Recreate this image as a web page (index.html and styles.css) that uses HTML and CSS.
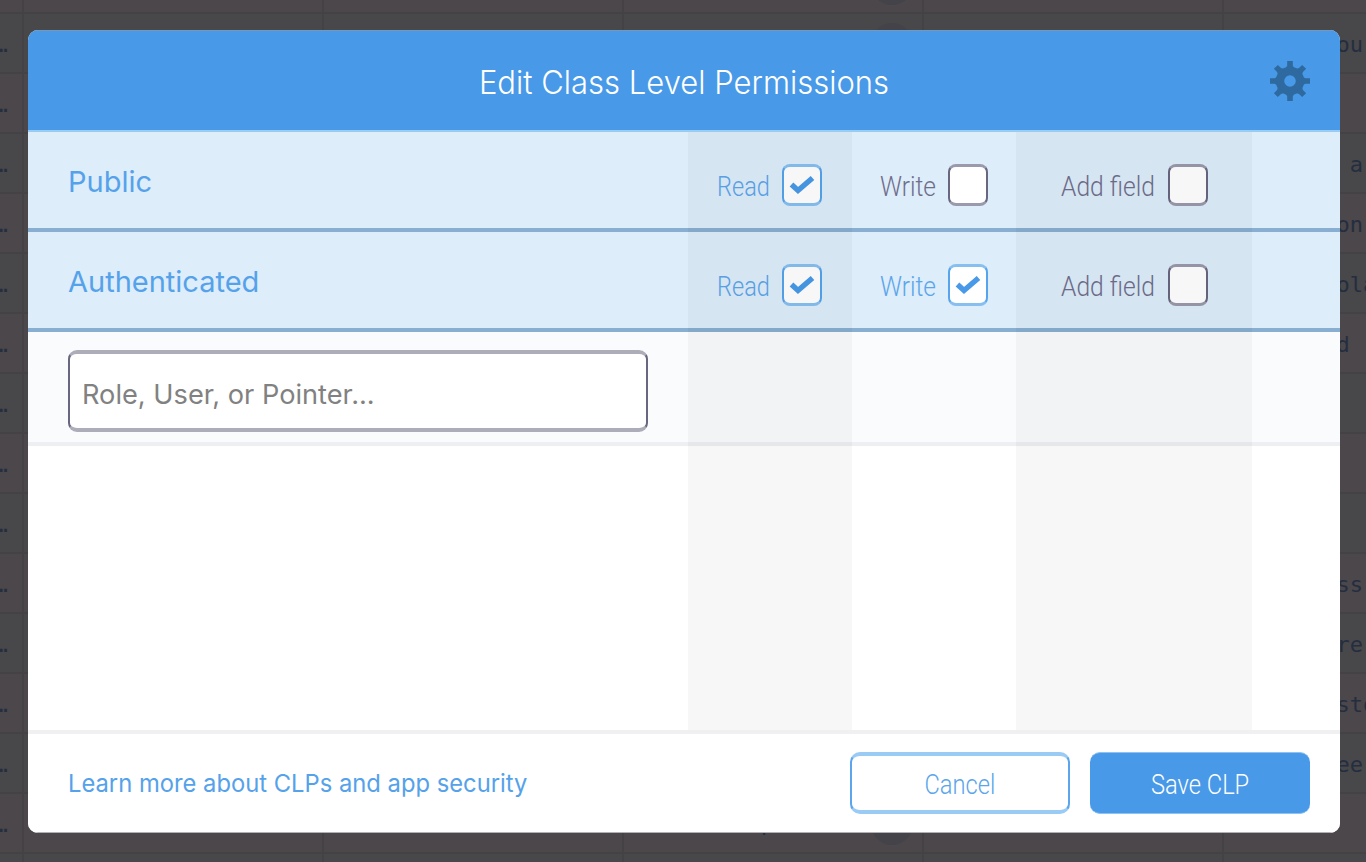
FILE: index.html
```html
<!DOCTYPE html>
<html lang="en">
<head>
<meta charset="utf-8">
<title>Edit Class Level Permissions</title>
<link rel="stylesheet" href="styles.css">
</head>
<body>
<div class="browser" id="browser"></div>
<div class="modal">
  <header class="header">
    <h1 class="title"><span>Edit Class Level Permissions</span></h1>
    <svg class="gear" viewBox="-20 -20 40 40"><defs><path id="tooth" d="M-4.6-12L-2.8-15.5V-20H2.8V-15.5L4.6-12Z"/></defs><path fill-rule="evenodd" d="M-14.2 0a14.2 14.2 0 1 0 28.4 0a14.2 14.2 0 1 0-28.4 0ZM-5.8 0a5.8 5.8 0 1 1 11.6 0a5.8 5.8 0 1 1-11.6 0Z"/><use href="#tooth"/><use href="#tooth" transform="rotate(45)"/><use href="#tooth" transform="rotate(90)"/><use href="#tooth" transform="rotate(135)"/><use href="#tooth" transform="rotate(180)"/><use href="#tooth" transform="rotate(225)"/><use href="#tooth" transform="rotate(270)"/><use href="#tooth" transform="rotate(315)"/></svg>
  </header>
  <main class="table">
    <div class="row">
      <div class="name public"><span>Public</span></div>
      <label class="perm on"><span class="read">Read</span><i class="box"><svg viewBox="0 0 26 20"><path d="M2.5 9.5L9 15.5L23.5 3"/></svg></i></label>
      <label class="perm"><span class="write">Write</span><i class="box"></i></label>
      <label class="perm add"><span class="field">Add field</span><i class="box"></i></label>
    </div>
    <div class="row">
      <div class="name auth"><span>Authenticated</span></div>
      <label class="perm on"><span class="read">Read</span><i class="box"><svg viewBox="0 0 26 20"><path d="M2.5 9.5L9 15.5L23.5 3"/></svg></i></label>
      <label class="perm on"><span class="write">Write</span><i class="box"><svg viewBox="0 0 26 20"><path d="M2.5 9.5L9 15.5L23.5 3"/></svg></i></label>
      <label class="perm add"><span class="field">Add field</span><i class="box"></i></label>
    </div>
    <div class="entry"><div class="input"><span>Role, User, or Pointer...</span></div></div>
    <div class="overlay"><b></b><b></b><b></b><b></b></div>
  </main>
  <footer class="footer">
    <a class="learn"><span>Learn more about CLPs and app security</span></a>
    <button class="button"><span class="cancel">Cancel</span></button>
    <button class="button primary"><span class="save">Save CLP</span></button>
  </footer>
</div>
<script src="rows.js"></script>
</body>
</html>
```
FILE: styles.css
```css
* { box-sizing: border-box; }
body { margin: 0; width: 1366px; height: 862px; overflow: hidden; background: #4b474a; font-family: Inter, sans-serif; }
.browser { height: 862px; overflow: hidden; font: 22px/62px "DejaVu Sans Mono", monospace; color: #242e40; }
.line { display: grid; grid-template-columns: 24px 300px 300px 300px 300px 142px; height: 60px; border-bottom: 2px solid #444245; background: #4b474a; }
.line:first-child { margin-top: -46px; }
.line:nth-child(even) { background: #484749; }
.line > div { border-right: 2px solid #444245; overflow: hidden; white-space: pre; height: 60px; }
.line > div:first-child { text-indent: -5.5px; }
.line .user { display: flex; justify-content: flex-end; align-items: center; padding-right: 9px; }
.line .partial { flex: 1; padding-left: 137px; }
.dot { width: 42px; height: 42px; border-radius: 50%; background: #444349; }
.line > .value { padding-left: 112.5px; border: 0; }

.modal { position: absolute; left: 28px; top: 30px; width: 1312px; height: 803px; border-radius: 10px; overflow: hidden; background: #fff; display: flex; flex-direction: column; }
.header { position: relative; height: 102px; background: #4899e8; border-top: 1px solid #7898bb; border-bottom: 2px solid #9acbf3; display: flex; justify-content: center; align-items: center; flex: none; }
.title { margin: 4px 0 0; color: #fff; font-size: 32.5px; font-weight: 300; line-height: 40px; white-space: nowrap; }
.gear { position: absolute; right: 30px; top: 30px; width: 40px; height: 40px; fill: #2e6a9f; }
.table { position: relative; height: 598px; flex: none; }
.row { display: grid; grid-template-columns: 660px 164px 164px 236px; height: 100px; background: #ddedfa; border-bottom: 4px solid #88aed1; }
.name { padding: 28px 0 0 40px; color: #55a2ea; font-size: 29px; line-height: 44px; white-space: nowrap; }
.perm { display: flex; justify-content: flex-end; align-items: center; gap: 12px; padding: 10px 30px 0 0; color: #706d8c; font: 300 28px/40px Roboto, sans-serif; }
.perm:nth-child(3) { padding-right: 28px; }
.perm.add { padding-right: 44px; gap: 13px; }
.perm.on { color: #5ba5eb; }
.box { width: 40px; height: 42px; border: 2px solid #696680; border-top: 3px solid #9a99ad; border-bottom: 3px solid #9a99ad; border-radius: 8px; background: #fff; display: flex; align-items: center; justify-content: center; }
.on .box { border-color: #86bff0 #55a4ed; }
.box svg { width: 26px; height: 20px; flex: none; fill: none; stroke: #4899e8; stroke-width: 5.4; }
.entry { height: 114px; background: #fafbfd; border-bottom: 4px solid #edeff2; padding: 18px 40px; }
.input { width: 580px; height: 82px; border: 2px solid #696780; border-top: 4px solid #adacb9; border-bottom: 4px solid #adacb9; border-radius: 9px; background: #fff; padding: 0 12px; color: #818181; font-size: 27.2px; line-height: 82px; white-space: nowrap; }
.overlay { position: absolute; inset: 0; display: grid; grid-template-columns: 660px 164px 164px 236px; pointer-events: none; }
.overlay b:nth-child(even) { background: rgba(0,0,0,.031); }
.footer { height: 103px; border-top: 4px solid #f0f0f3; border-bottom: 1px solid #b1b0b2; padding: 18px 30px 0 40px; display: flex; gap: 20px; background: #fff; }
.learn { flex: 1; color: #55a2ea; font-size: 24.5px; line-height: 62px; white-space: nowrap; }
.button { width: 220px; height: 62px; padding: 4px 0 0; border: 2px solid #5aa5ec; border-top: 4px solid #9acbf4; border-bottom: 4px solid #9acbf4; border-radius: 10px; background: #fff; color: #5ba5eb; font: 300 28px/40px Roboto, sans-serif; }
.primary { border: 0; border-top: 1px solid #8fc2f2; border-bottom: 1px solid #8fc2f2; background: #4899e8; color: #fff; }
.title span, .name span, .perm span, .input span, .learn span, .button span { display: inline-block; white-space: nowrap; }
.title span { transform: scaleX(.954); }
.perm span { transform-origin: right; position: relative; top: 2px; }
.read { transform: scaleX(.84); }
.write { transform: scaleX(.875); }
.field { transform: scaleX(.878); }
.button span { transform: scaleX(.845); }
.name span, .input span, .learn span { transform-origin: left; }
.learn span { transform: scaleX(.97); }
```
FILE: rows.js
```js
const values = ["", "ou", "", " a", "on", "ola", "d", "", "", "", "ss", "re", "sto", "ee", "", ""];
const browser = document.getElementById("browser");
values.forEach((value, i) => {
  const line = document.createElement("div");
  line.className = "line";
  const marked = i < 2 || i === 14;
  line.innerHTML = `<div>…</div><div></div><div></div><div class="user">${i === 14 ? '<span class="partial">p</span>' : ""}${marked ? '<i class="dot"></i>' : ""}</div><div></div><div class="value">${value}</div>`;
  browser.appendChild(line);
});
```
